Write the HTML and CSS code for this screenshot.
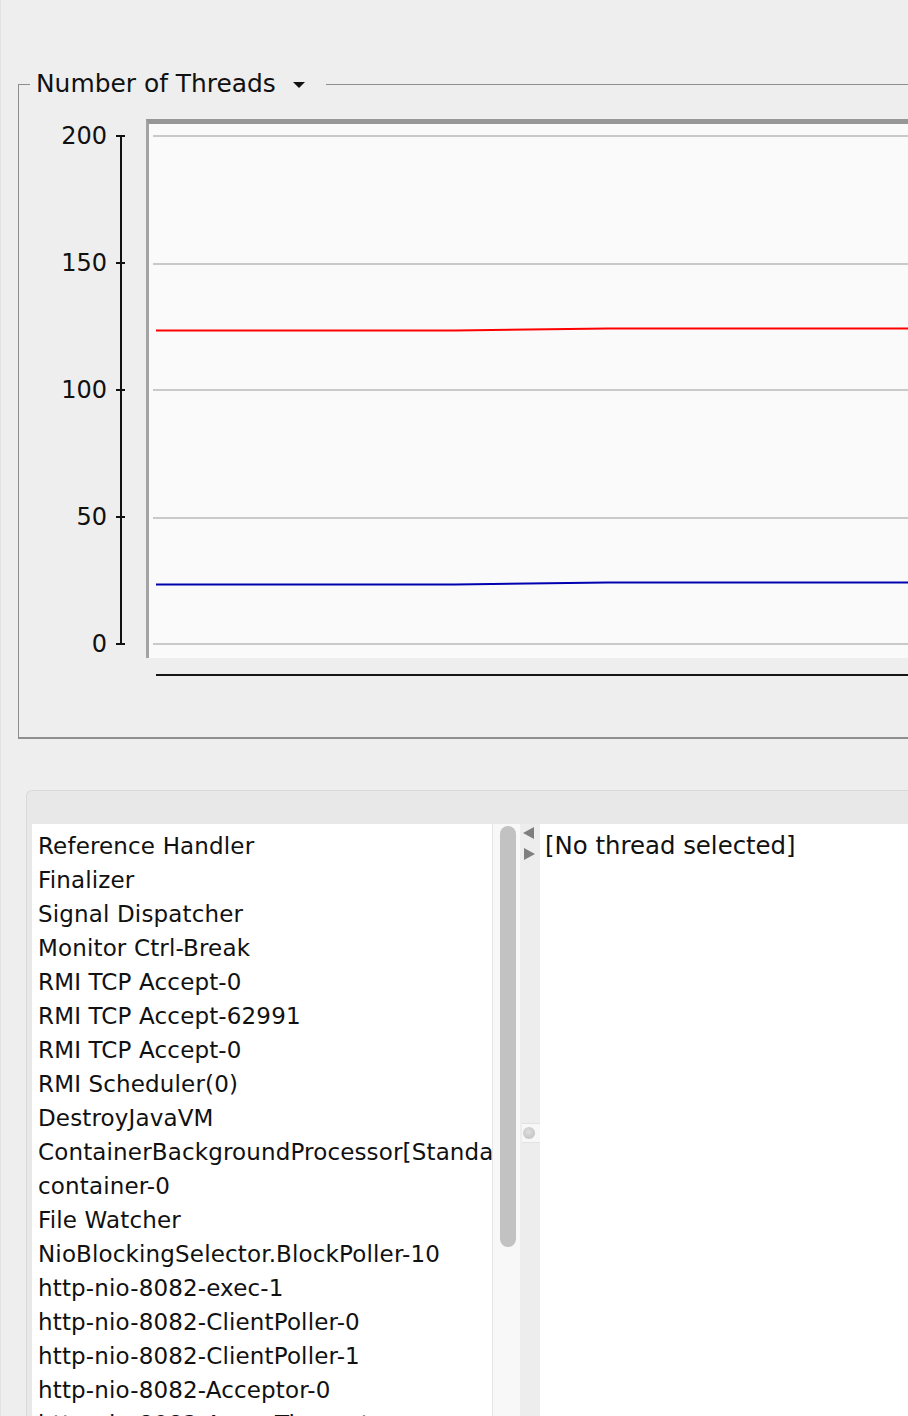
FILE: index.html
```html
<!DOCTYPE html>
<html lang="en">
<head>
<meta charset="utf-8">
<title>Threads</title>
<link rel="stylesheet" href="styles.css">
</head>
<body>
<div class="screen">
  <fieldset class="threads-panel">
    <legend class="panel-title">Number of Threads<span class="dropdown-caret"></span></legend>
    <div class="chart">
      <div class="y-axis">
        <div class="y-labels">
          <span>200</span><span>150</span><span>100</span><span>50</span><span>0</span>
        </div>
        <div class="y-ticks"><i></i><i></i><i></i><i></i><i></i></div>
      </div>
      <div class="plot-area">
        <div class="plot">
          <svg class="plot-svg" width="1000" height="534" viewBox="0 0 1000 534">
            <g stroke="#c9c9c9" stroke-width="2">
              <line x1="4" y1="12" x2="1000" y2="12"/>
              <line x1="4" y1="140" x2="1000" y2="140"/>
              <line x1="4" y1="266" x2="1000" y2="266"/>
              <line x1="4" y1="394" x2="1000" y2="394"/>
              <line x1="4" y1="520" x2="1000" y2="520"/>
            </g>
            <polyline fill="none" stroke="#ff0000" stroke-width="2" points="7,206.5 306,206.5 459,204.5 1000,204.5"/>
            <polyline fill="none" stroke="#0000b0" stroke-width="2" points="7,460.5 306,460.5 459,458.5 1000,458.5"/>
          </svg>
        </div>
        <div class="x-axis"></div>
      </div>
    </div>
  </fieldset>

  <section class="threads-browser">
    <div class="browser-header"></div>
    <div class="browser-split">
      <div class="thread-list-pane">
        <ul class="thread-list">
          <li>Reference Handler</li>
          <li>Finalizer</li>
          <li>Signal Dispatcher</li>
          <li>Monitor Ctrl-Break</li>
          <li>RMI TCP Accept-0</li>
          <li>RMI TCP Accept-62991</li>
          <li>RMI TCP Accept-0</li>
          <li>RMI Scheduler(0)</li>
          <li>DestroyJavaVM</li>
          <li>ContainerBackgroundProcessor[StandardEngine[Tomcat]]</li>
          <li>container-0</li>
          <li>File Watcher</li>
          <li>NioBlockingSelector.BlockPoller-10</li>
          <li>http-nio-8082-exec-1</li>
          <li>http-nio-8082-ClientPoller-0</li>
          <li>http-nio-8082-ClientPoller-1</li>
          <li>http-nio-8082-Acceptor-0</li>
          <li>http-nio-8082-AsyncTimeout</li>
        </ul>
        <div class="scrollbar"><div class="scroll-thumb"></div></div>
      </div>
      <div class="split-divider">
        <span class="arrow arrow-left"></span>
        <span class="arrow arrow-right"></span>
        <span class="divider-handle"><span class="knob"></span></span>
      </div>
      <div class="details-pane">[No thread selected]</div>
    </div>
  </section>
</div>
</body>
</html>
```

FILE: styles.css
```css
html, body {
  margin: 0;
  padding: 0;
  background: #eeeeee;
  overflow: hidden;
}

body {
  width: 908px;
  height: 1416px;
  font-family: "DejaVu Sans", "Noto Sans", sans-serif;
  color: #000;
}

.screen {
  height: 1416px;
  padding-top: 69px;
  box-sizing: border-box;
  border-left: 1px solid #e2e2e2;
  overflow: hidden;
}

/* ---------- Number of Threads panel ---------- */
.threads-panel {
  margin: 0 0 0 17px;
  padding: 0;
  width: 1000px;
  border-style: solid;
  border-color: #8e8e8e;
  border-width: 1px 0 2px 1px;
  min-inline-size: 0;
}

.panel-title {
  margin-left: 11px;
  padding: 0 21px 0 6px;
  height: 30px;
  line-height: 30px;
  font-size: 24.9px;
  color: #111;
  display: flex;
  align-items: center;
}

.dropdown-caret {
  display: inline-block;
  width: 0;
  height: 0;
  margin-left: 17px;
  margin-top: 2px;
  border-left: 6px solid transparent;
  border-right: 6px solid transparent;
  border-top: 6px solid #111;
}

.chart {
  display: flex;
  align-items: flex-start;
  height: 638px;
}

.y-axis {
  display: flex;
  padding-top: 24px;
}

.y-labels {
  width: 88px;
  display: flex;
  flex-direction: column;
  gap: 101px;
}

.y-labels span {
  height: 26px;
  line-height: 26px;
  font-size: 24px;
  text-align: right;
  color: #111;
}

.y-ticks {
  margin-left: 9px;
  width: 9px;
  display: flex;
  flex-direction: column;
  gap: 101px;
  background: linear-gradient(#111, #111) center / 2px calc(100% - 24px) no-repeat;
}

.y-ticks i {
  display: block;
  height: 26px;
  background: linear-gradient(#111, #111) center / 100% 2px no-repeat;
}

.plot-area {
  flex: 1;
  margin-left: 21px;
  margin-top: 20px;
}

.plot {
  height: 534px;
  background: #fafafa;
  border-top: 5px solid #979797;
  border-left: 3px solid #a3a3a3;
  overflow: hidden;
}

.plot-svg {
  display: block;
}

.x-axis {
  margin-top: 16px;
  margin-left: 10px;
  height: 2px;
  background: #151515;
}

/* ---------- Threads browser ---------- */
.threads-browser {
  margin-top: 51px;
  margin-left: 25px;
  width: 1000px;
  background: #e8e8e8;
  border-top: 1px solid #d9d9d9;
  border-left: 1px solid #d9d9d9;
  border-top-left-radius: 6px;
}

.browser-header {
  height: 33px;
}

.browser-split {
  display: flex;
  height: 622px;
  padding-left: 5px;
}

.thread-list-pane {
  display: flex;
  background: #fff;
}

.thread-list {
  list-style: none;
  margin: 0;
  padding: 5px 0 0 6px;
  width: 454px;
  overflow: hidden;
  font-size: 23px;
  line-height: 34px;
  letter-spacing: 0.15px;
  white-space: nowrap;
  color: #111;
}

.scrollbar {
  width: 27px;
  background: #f8f8f8;
  border-left: 1px solid #e6e6e6;
  padding-top: 2px;
}

.scroll-thumb {
  margin-left: 7px;
  width: 16px;
  height: 421px;
  border-radius: 8px;
  background: #c2c2c2;
}

.split-divider {
  width: 20px;
  background: #ededed;
  display: flex;
  flex-direction: column;
  align-items: flex-start;
}

.arrow {
  display: block;
  width: 0;
  height: 0;
  border-top: 6px solid transparent;
  border-bottom: 6px solid transparent;
}

.arrow-left {
  margin-top: 3px;
  margin-left: 3px;
  border-right: 11px solid #7f7f7f;
}

.arrow-right {
  margin-top: 9px;
  margin-left: 4px;
  border-left: 11px solid #7f7f7f;
}

.divider-handle {
  margin-top: 263px;
  margin-left: 2px;
  width: 18px;
  height: 18px;
  background: #f7f7f7;
  border-top: 1px solid #e2e2e2;
  border-bottom: 1px solid #e2e2e2;
  display: flex;
  align-items: center;
  justify-content: center;
}

.knob {
  width: 12px;
  height: 12px;
  border-radius: 50%;
  background: radial-gradient(circle at 45% 40%, #dedede, #bcbcbc);
  margin-right: 4px;
}

.details-pane {
  flex: 1;
  background: #fff;
  padding: 5px 0 0 5px;
  font-size: 24.4px;
  line-height: 34px;
  color: #111;
  white-space: nowrap;
}
```
